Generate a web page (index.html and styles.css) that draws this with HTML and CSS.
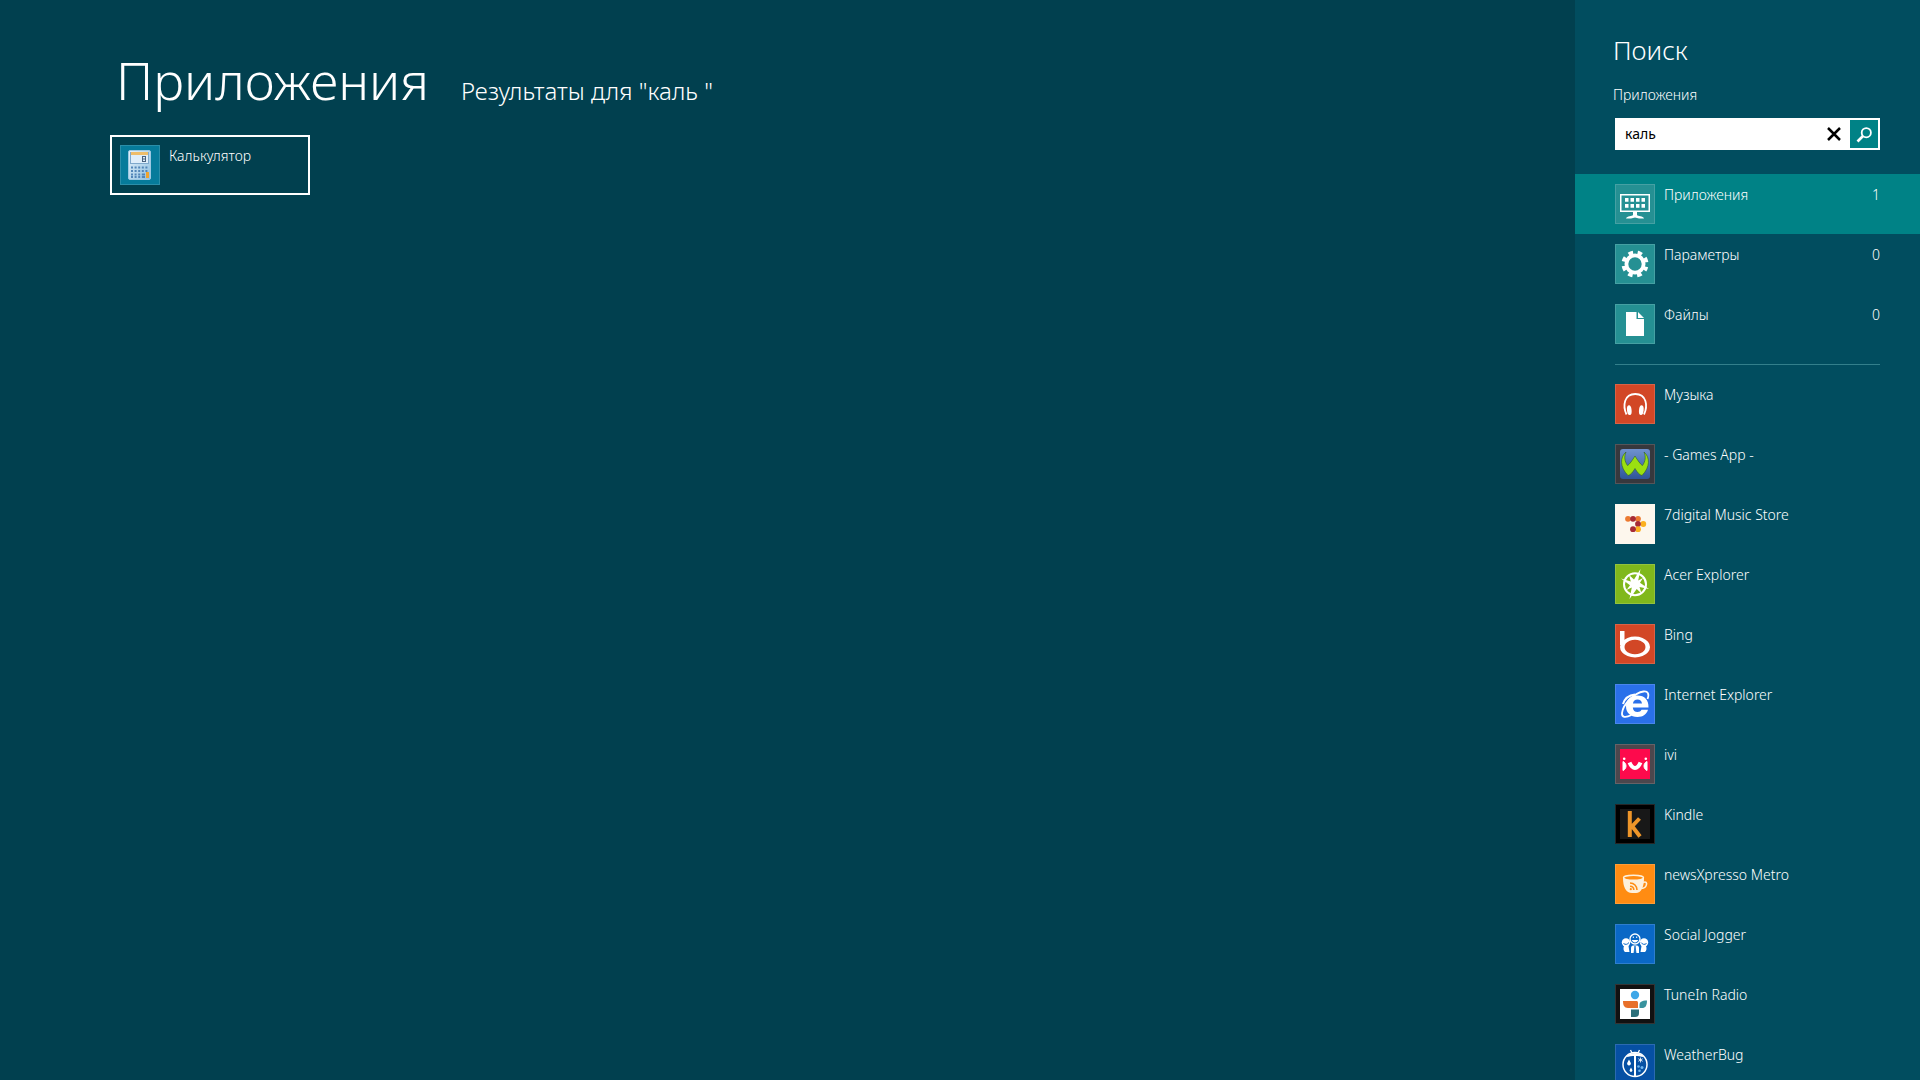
FILE: index.html
```html
<!DOCTYPE html>
<html lang="ru">
<head>
    <meta charset="UTF-8">
    <meta name="viewport" content="width=device-width, initial-scale=1.0">
    <title>Приложения</title>
    <link rel="stylesheet" href="styles.css">
</head>
<body>
<div class="screen">
    <main class="results">
        <header class="results-header">
            <h1>Приложения</h1>
            <p>Результаты для "каль "</p>
        </header>
        <a href="#" class="tile">
            <svg class="icon" viewBox="0 0 40 40">
                <defs>
                    <linearGradient id="calcBody" x1="0" y1="0" x2="1" y2="1">
                        <stop offset="0" stop-color="#e6f3fb"/>
                        <stop offset="1" stop-color="#8fbfe0"/>
                    </linearGradient>
                </defs>
                <rect width="40" height="40" fill="#067b9b"/>
                <rect x="8.500" y="5.500" width="22" height="29" rx="1.500" fill="url(#calcBody)" stroke="#9cc8e2"/>
                <rect x="10" y="7" width="19" height="12" fill="#7fa9cc"/>
                <rect x="11" y="8" width="17" height="10" fill="#dfeefa"/>
                <rect x="11" y="7" width="17" height="3" fill="#eebd6a"/>
                <rect x="22.500" y="11.500" width="3" height="5" fill="none" stroke="#4a627e"/>
                <path d="M22 14h4" stroke="#4a627e"/>
                <path d="M11 22.500h18M11 26h18M11 29.500h11M11 32h11" stroke="#5286b8" stroke-width="2" stroke-dasharray="2 1.600"/>
                <path d="M22 29.500h3M22 32h3" stroke="#5286b8" stroke-width="2"/>
                <rect x="26" y="27" width="3" height="6" fill="#f0a32c"/>
            </svg>
            <span class="name">Калькулятор</span>
        </a>
    </main>

    <aside class="search">
        <div class="search-title">
            <h2>Поиск</h2>
            <label for="query">Приложения</label>
        </div>
        <form class="search-box">
            <input type="text" id="query" value="каль">
            <button type="reset" class="clear" aria-label="Очистить">
                <svg width="14" height="14" viewBox="0 0 14 14"><path d="M1 1l12 12M13 1L1 13" stroke="#000" stroke-width="2.500"/></svg>
            </button>
            <button type="submit" class="go" aria-label="Найти">
                <svg width="28" height="28" viewBox="0 0 28 28" fill="none" stroke="#fff"><circle cx="16.300" cy="12.700" r="4.600" stroke-width="1.800"/><path d="M13 16l-5.500 5.500" stroke-width="2.600"/></svg>
            </button>
        </form>

        <nav class="list">
            <a href="#" class="row active">
                <svg class="icon" viewBox="0 0 40 40">
                    <rect width="40" height="40" fill="#259093"/>
                    <rect x="5.750" y="10.750" width="28.500" height="16.500" fill="none" stroke="#fff" stroke-width="1.500"/>
                    <path d="M10 15.800h20M10 21.800h20" stroke="#fff" stroke-width="3.800" stroke-dasharray="3.500 2"/>
                    <path d="M18 28h4v3c1 1.500 6 .5 7 3.500h-5l-4-1-4 1h-5c1-3 6-2 7-3.500z" fill="#fff"/>
                </svg>
                <span class="name">Приложения</span>
                <span class="count">1</span>
            </a>
            <a href="#" class="row">
                <svg class="icon" viewBox="0 0 40 40">
                    <rect width="40" height="40" fill="#259093"/>
                    <circle cx="20" cy="20" r="8.600" fill="none" stroke="#fff" stroke-width="3.800"/>
                    <g transform="rotate(22.500 20 20)">
                        <circle cx="20" cy="20" r="11.500" fill="none" stroke="#fff" stroke-width="4" stroke-dasharray="4.600 4.432" stroke-dashoffset="2.300"/>
                    </g>
                </svg>
                <span class="name">Параметры</span>
                <span class="count">0</span>
            </a>
            <a href="#" class="row">
                <svg class="icon" viewBox="0 0 40 40">
                    <rect width="40" height="40" fill="#259093"/>
                    <path d="M11 8h10.500v7h7.500v17H11z" fill="#fff"/>
                    <path d="M23 8l6 6h-6z" fill="#fff"/>
                </svg>
                <span class="name">Файлы</span>
                <span class="count">0</span>
            </a>
        </nav>

        <hr>

        <nav class="list">
            <a href="#" class="row">
                <svg class="icon" viewBox="0 0 40 40">
                    <rect width="40" height="40" fill="#d24726"/>
                    <path d="M11.500 30.500C7.500 22 9 10 20.300 10S33 22 29 30.500" fill="none" stroke="#fff" stroke-width="1.800"/>
                    <ellipse cx="14.300" cy="26.200" rx="2.300" ry="4.900" fill="#fff" transform="rotate(-6 14.300 26.200)"/>
                    <ellipse cx="26.300" cy="26.200" rx="2.300" ry="4.900" fill="#fff" transform="rotate(6 26.300 26.200)"/>
                </svg>
                <span class="name">Музыка</span>
            </a>
            <a href="#" class="row">
                <svg class="icon" viewBox="0 0 40 40">
                    <defs>
                        <linearGradient id="wild" x1="0" y1="0" x2="0" y2="1">
                            <stop offset="0" stop-color="#6f92cf"/>
                            <stop offset="1" stop-color="#2f5599"/>
                        </linearGradient>
                    </defs>
                    <rect width="40" height="40" fill="#37383d"/>
                    <rect x="5" y="5" width="30" height="30" rx="3" fill="url(#wild)"/>
                    <path d="M11 8C5 13 4.500 23 13 31.500c2.500-.5 5-3.500 7-7 2 3.500 4.500 6.500 7 7C35.500 23 35 13 29 8c2 5 1.500 9-1.500 13.500-2-1-5-5.500-7.500-9.500-2.500 4-5.500 8.500-7.500 9.500C9.500 17 9 13 11 8z" fill="#9be010" stroke="#2c5c28" stroke-width=".6"/>
                </svg>
                <span class="name">- Games App -</span>
            </a>
            <a href="#" class="row">
                <svg class="icon" viewBox="0 0 40 40">
                    <rect width="40" height="40" fill="#fdf7ed"/>
                    <circle cx="13" cy="14.800" r="2.900" fill="#ec7a30"/>
                    <circle cx="23" cy="14.800" r="2.900" fill="#ec7a30"/>
                    <circle cx="18" cy="14.800" r="2.900" fill="#a62b36"/>
                    <circle cx="28.300" cy="20" r="2.900" fill="#fbb01e"/>
                    <circle cx="23" cy="20" r="2.900" fill="#a62b36"/>
                    <circle cx="23" cy="25.200" r="2.900" fill="#fbb01e"/>
                    <circle cx="18" cy="25.200" r="2.900" fill="#a62b36"/>
                </svg>
                <span class="name">7digital Music Store</span>
            </a>
            <a href="#" class="row">
                <svg class="icon" viewBox="0 0 40 40">
                    <rect width="40" height="40" fill="#80b81c"/>
                    <circle cx="20" cy="20.300" r="11" fill="none" stroke="#fff" stroke-width="2"/>
                    <path d="M25.500 5l-2.300 11.500L28 14l-3 4.700 9 6.300-9.500-2 2 6.500-4.800-4.500L14.500 35l2.300-11.500L11.500 26l3.500-4.800L6 14.500l9.800 3L14 11l5 4.500z" fill="#fff"/>
                </svg>
                <span class="name">Acer Explorer</span>
            </a>
            <a href="#" class="row">
                <svg class="icon" viewBox="0 0 40 40">
                    <rect width="40" height="40" fill="#d24726"/>
                    <path d="M5 7h4.500v14H5z" fill="#fff"/>
                    <path d="M20 12.500a15 10.500 0 1 0 .01 0zm0 3.200a10.500 7.300 0 1 1-.01 0z" fill="#fff" fill-rule="evenodd"/>
                </svg>
                <span class="name">Bing</span>
            </a>
            <a href="#" class="row">
                <svg class="icon" viewBox="0 0 40 40">
                    <rect width="40" height="40" fill="#2a70ea"/>
                    <path d="M33.500 23.500H17.800c.3 3 2 4.500 4.700 4.500 2 0 3.300-.7 4-2.200h6.500C31.500 30.500 28 33 22.500 33 15.500 33 11 29 11 22.300S15.500 11.500 22.300 11.500c7.500 0 11.500 4.500 11.200 12zM27 19.500c-.3-2.500-2-4-4.500-4s-4.200 1.500-4.600 4z" fill="#fff" fill-rule="evenodd"/>
                    <path d="M32.500 15c2-5 .5-8-4-7.500C20 8.500 8 20 7 29c-.5 4.500 3.500 5 9.500 2" fill="none" stroke="#fff" stroke-width="1.800"/>
                    <path d="M8 20c2-6.500 7-9 12-9.500" fill="none" stroke="#fff" stroke-width="2"/>
                </svg>
                <span class="name">Internet Explorer</span>
            </a>
            <a href="#" class="row">
                <svg class="icon" viewBox="0 0 40 40">
                    <rect width="40" height="40" fill="#4c474d"/>
                    <rect x="5" y="5" width="30" height="30" fill="#fd0a4c"/>
                    <path d="M8 17.500c4 1.500 4 7.500 0 9zM32 17.500c-4 1.500-4 7.500 0 9z" fill="#fff" stroke="#fff"/>
                    <path d="M14.500 18.500c1.500 3.500 3.500 5.500 5.500 5.500s4-2 5.500-5.500" fill="none" stroke="#fff" stroke-width="4"/>
                    <circle cx="9.200" cy="14.800" r="1.300" fill="#fff"/>
                    <circle cx="30.800" cy="14.800" r="1.300" fill="#fff"/>
                </svg>
                <span class="name">ivi</span>
            </a>
            <a href="#" class="row">
                <svg class="icon" viewBox="0 0 40 40">
                    <rect width="40" height="40" fill="#000"/>
                    <rect x="5" y="5" width="30" height="30" fill="#181818"/>
                    <path d="M14.800 7v26M16 23.500L24.500 14.500M17 22l8 10.500" fill="none" stroke="#ee9529" stroke-width="4"/>
                </svg>
                <span class="name">Kindle</span>
            </a>
            <a href="#" class="row">
                <svg class="icon" viewBox="0 0 40 40">
                    <rect width="40" height="40" fill="#ff8c12"/>
                    <path d="M8 14c0 9 3 15 9 15h4c5 0 8-6 8-15z" fill="#fdf0dc"/>
                    <ellipse cx="18.500" cy="13.800" rx="10" ry="2.500" fill="#ff8c12" stroke="#fdf0dc" stroke-width="1.400"/>
                    <path d="M28 18.500c3-1.500 4.500.5 3 3.500-1 2-3 2.500-4.500 2" fill="none" stroke="#fdf0dc" stroke-width="1.600"/>
                    <path d="M15 19c4 0 7 3 7 7M15 22.200c2.300 0 3.800 1.500 3.800 3.800" fill="none" stroke="#ff8c12" stroke-width="1.600"/>
                    <circle cx="15.800" cy="25.200" r="1.100" fill="#ff8c12"/>
                </svg>
                <span class="name">newsXpresso Metro</span>
            </a>
            <a href="#" class="row">
                <svg class="icon" viewBox="0 0 40 40">
                    <rect width="40" height="40" fill="#0a68c6"/>
                    <circle cx="11" cy="18.500" r="4.200" fill="#fff"/>
                    <circle cx="29" cy="18.500" r="4.200" fill="#fff"/>
                    <path d="M9 22h4.500l1 6H10c-1.500-1-2-4-1-6zM31 22h-4.500l-1 6H30c1.500-1 2-4 1-6z" fill="#fff"/>
                    <path d="M8.500 19.500c2 1.500 4 1 5.500-1M26 18.500c1.500 2 3.500 2.500 5.500 1" fill="none" stroke="#0a68c6"/>
                    <circle cx="20" cy="15" r="5" fill="#0a68c6" stroke="#fff" stroke-width="1.300"/>
                    <path d="M18.300 12.500v1.500M21.700 12.500v1.500M17.200 16.500c1.500 2 4 2 5.600 0z" fill="#fff" stroke="#fff"/>
                    <path d="M16 29v-5c0-1.500 1-2.500 2-2.500h4c1 0 2 1 2 2.500v5z" fill="#fff"/>
                    <path d="M20 22l-1 7h2z" fill="#0a68c6" stroke="#0a68c6" stroke-width=".8"/>
                </svg>
                <span class="name">Social Jogger</span>
            </a>
            <a href="#" class="row">
                <svg class="icon" viewBox="0 0 40 40">
                    <rect width="40" height="40" fill="#111"/>
                    <rect x="5" y="5" width="30" height="30" fill="#fff"/>
                    <circle cx="20" cy="11" r="4.200" fill="#3fa7e8"/>
                    <path d="M8 17h13c1.500 0 2 .5 2 2v5H13c-4 0-5-3-5-7z" fill="#e8702a"/>
                    <path d="M32 16.500c0 5-1.500 7.500-5 7.500h-2.500v-3c0-3 2-4.500 7.500-4.500z" fill="#38939e"/>
                    <path d="M16 25.500h8V29c0 3-1.500 4-4 4h-4z" fill="#2b6f79"/>
                </svg>
                <span class="name">TuneIn Radio</span>
            </a>
            <a href="#" class="row">
                <svg class="icon" viewBox="0 0 40 40">
                    <rect width="40" height="40" fill="#0650a4"/>
                    <circle cx="20" cy="20.500" r="12" fill="none" stroke="#fff" stroke-width="1.500"/>
                    <path d="M11.500 13C14 7.500 26 7.500 28.500 13c-5-1.500-12-1.500-17 0z" fill="#fff"/>
                    <path d="M17 9l-1.500-3M23 9l1.500-3" stroke="#fff" stroke-width="1.300"/>
                    <path d="M20 12v20" stroke="#fff" stroke-width="2"/>
                    <path d="M14 15.500l1.700 3.200a1.900 1.900 0 1 1-3.400 0zM16 23.500l1.200 2.300a1.400 1.400 0 1 1-2.400 0z" fill="#fff"/>
                    <path d="M25.500 13.500v5M23.300 14.700l4.400 2.600M27.700 14.700l-4.400 2.600" stroke="#fff" stroke-width=".8"/>
                    <circle cx="23.500" cy="22.500" r="1.300" fill="#6db4ee"/>
                    <circle cx="27" cy="23.500" r="1.500" fill="#6db4ee"/>
                    <circle cx="24.500" cy="26.800" r="1.300" fill="#6db4ee"/>
                </svg>
                <span class="name">WeatherBug</span>
            </a>
        </nav>
    </aside>
</div>
</body>
</html>
```
FILE: styles.css
```css
* {
    box-sizing: border-box;
}

body {
    margin: 0;
    background-color: #01404f;
    color: #fff;
    font-family: "Noto Sans", "Open Sans", sans-serif;
    font-size: 14px;
    font-weight: 300;
    line-height: 22px;
}

h1, h2, p {
    margin: 0;
    font-weight: 300;
}

a {
    color: inherit;
    text-decoration: none;
}

.screen {
    display: flex;
    height: 100vh;
    overflow: hidden;
}

.results {
    flex: 1;
    padding: 48px 110px;
}

.results-header {
    display: flex;
    align-items: baseline;
    gap: 32px;
    margin-bottom: 23px;
    padding-left: 6px;
}

.results-header h1 {
    font-size: 52px;
    line-height: 64px;
}

.results-header p {
    font-size: 24px;
    line-height: 32px;
}

.tile {
    display: flex;
    gap: 9px;
    width: 200px;
    height: 60px;
    padding: 8px;
    border: 2px solid #fff;
}

.icon {
    flex: none;
    width: 40px;
    height: 40px;
    outline: 1px solid rgba(255, 255, 255, 0.15);
    outline-offset: -1px;
}

.search {
    width: 345px;
    padding-top: 32px;
    background-color: #014d5f;
}

.search-title {
    padding: 0 38px;
}

.search-title h2 {
    margin-bottom: 16px;
    font-size: 26px;
    line-height: 36px;
}

.search-title label {
    display: block;
}

.search-box {
    display: flex;
    align-items: center;
    height: 32px;
    margin: 12px 40px 24px;
    padding: 2px;
    background: #fff;
}

.search-box input {
    flex: 1;
    min-width: 0;
    padding: 0 8px;
    border: none;
    outline: none;
    background: none;
    color: #000;
    font: inherit;
    font-weight: 400;
}

.search-box button {
    display: flex;
    align-items: center;
    justify-content: center;
    width: 28px;
    height: 28px;
    padding: 0;
    border: none;
    background: none;
    cursor: pointer;
}

.search-box .clear {
    width: 32px;
}

.search-box .go {
    background: #008286;
}

.row {
    display: flex;
    gap: 9px;
    height: 60px;
    padding: 10px 40px;
}

.row.active {
    background-color: #008286;
}

.name {
    flex: 1;
}

hr {
    margin: 10px 40px 9px;
    border: none;
    border-top: 1px solid #337f8b;
}
```
